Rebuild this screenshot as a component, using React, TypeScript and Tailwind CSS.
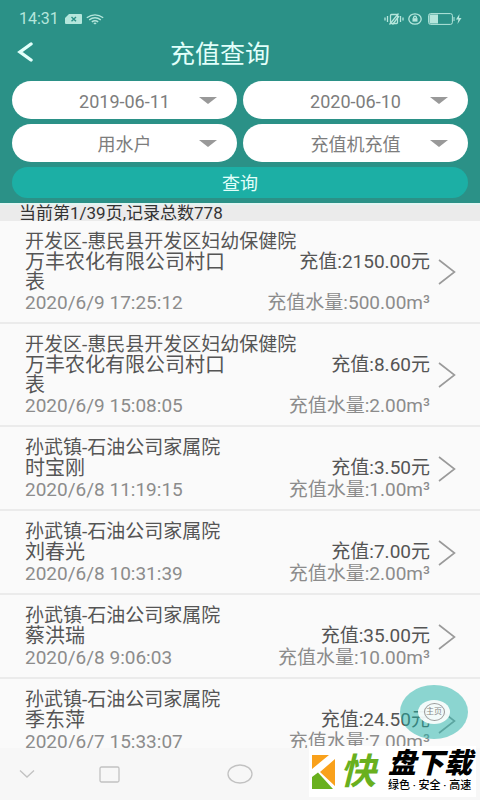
type Recharge = {
  site: string;
  name: string;
  time: string;
  amount: string;
  water: string;
};

const records: Recharge[] = [
  { site: '开发区-惠民县开发区妇幼保健院', name: '万丰农化有限公司村口表', time: '2020/6/9 17:25:12', amount: '2150.00', water: '500.00' },
  { site: '开发区-惠民县开发区妇幼保健院', name: '万丰农化有限公司村口表', time: '2020/6/9 15:08:05', amount: '8.60', water: '2.00' },
  { site: '孙武镇-石油公司家属院', name: '时宝刚', time: '2020/6/8 11:19:15', amount: '3.50', water: '1.00' },
  { site: '孙武镇-石油公司家属院', name: '刘春光', time: '2020/6/8 10:31:39', amount: '7.00', water: '2.00' },
  { site: '孙武镇-石油公司家属院', name: '蔡洪瑞', time: '2020/6/8 9:06:03', amount: '35.00', water: '10.00' },
  { site: '孙武镇-石油公司家属院', name: '季东萍', time: '2020/6/7 15:33:07', amount: '24.50', water: '7.00' },
];

const filters = [
  { label: '开始日期', value: '2019-06-11' },
  { label: '结束日期', value: '2020-06-10' },
  { label: '用户类型', value: '用水户' },
  { label: '充值方式', value: '充值机充值' },
];

function StatusBar() {
  return (
    <div className="flex h-[38px] items-center justify-between pl-[19px] pr-[18px] text-[#b5e6dc]">
      <div className="flex items-center gap-1">
        <span className="mr-[2px] text-[16px] leading-5">14:31</span>
        <svg width="17" height="10" viewBox="0 0 17 10">
          <path d="M4 0H16Q17 0 17 1V9Q17 10 16 10H1Q0 10 0 9V4Z" fill="currentColor" />
          <path d="M6.5 3l4.5 4.2M11 3L6.5 7.2" stroke="#2b9187" strokeWidth="1.4" />
        </svg>
        <svg width="18" height="11" viewBox="0 0 18 11" fill="none" stroke="currentColor" strokeWidth="1.4">
          <path d="M.8 3.7Q9-2 17.2 3.7M3.2 5.8Q9 1.8 14.8 5.8M5.8 7.9Q9 5.6 12.2 7.9" />
          <path d="M7.2 9L9 10.6 10.8 9Q9 8 7.2 9Z" fill="currentColor" stroke="none" />
        </svg>
      </div>
      <div className="flex items-center gap-1">
        <svg width="20" height="12" viewBox="0 0 20 12" fill="none" stroke="currentColor" strokeWidth="1.3">
          <path d="M1 4.5v3M3.5 3v6M16.5 3v6M19 4.5v3" />
          <rect x="6.5" y="1.5" width="7" height="9" rx="1" />
          <path d="M5.5 11.5L14.5.5M8.5 11.5L15 3" />
        </svg>
        <svg width="14" height="12" viewBox="0 0 14 12" fill="none" stroke="currentColor" strokeWidth="1.3">
          <ellipse cx="7" cy="6" rx="6.2" ry="5.2" />
          <rect x="4.5" y="5.2" width="5" height="3.4" fill="currentColor" stroke="none" />
          <path d="M5.5 5.5Q5.5 3.2 7 3.2T8.5 5.5" />
        </svg>
        <svg className="ml-[2px]" width="34" height="12" viewBox="0 0 34 12">
          <rect x=".6" y=".6" width="23.8" height="10.8" rx="2" fill="none" stroke="currentColor" />
          <rect x="1.5" y="1.5" width="8.5" height="9" fill="currentColor" />
          <path d="M26 4v4" stroke="currentColor" />
          <path d="M31.5 1L28 6.6h2.4L29.5 11 33.5 5H31Z" fill="currentColor" />
        </svg>
      </div>
    </div>
  );
}

function FilterSelect({ label, value }: { label: string; value: string }) {
  return (
    <div className="relative">
      <select
        aria-label={label}
        className="block h-[38px] w-full appearance-none rounded-[19px] bg-white pt-[2px] text-center text-[18px] text-[#7d7d7d]"
        defaultValue={value}
      >
        <option>{value}</option>
      </select>
      <svg className="pointer-events-none absolute right-5 top-4" width="18" height="7" viewBox="0 0 18 7">
        <path d="M0 0H18L9 7Z" fill="#999" />
      </svg>
    </div>
  );
}

function RecordRow({ record }: { record: Recharge }) {
  return (
    <li>
      <a href="#detail" className="flex items-center border-b-2 border-[#ebebeb] pb-[9px] pl-[25px] pr-6 pt-[10px]">
        <div className="min-w-0 flex-1 text-[19px]">
          <p className="whitespace-nowrap leading-[21px] text-[#555]">{record.site}</p>
          <div className="flex min-h-[21px] items-start justify-between leading-5 text-[#555]">
            <span className="w-1/2 break-all text-[20px]">{record.name}</span>
            <span className="whitespace-nowrap">充值:{record.amount}元</span>
          </div>
          <div className="flex items-center justify-between whitespace-nowrap leading-[21px] text-[#8c8c8c]">
            <span>{record.time}</span>
            <span>充值水量:{record.water}m³</span>
          </div>
        </div>
        <svg className="ml-2 shrink-0" width="18" height="26" viewBox="0 0 18 26">
          <path d="M1 1L16.5 13 1 25" fill="none" stroke="#9a9a9a" strokeWidth="1.6" />
        </svg>
      </a>
    </li>
  );
}

function SystemNav() {
  return (
    <nav className="flex h-[52px] shrink-0 items-center bg-[#f7f7f7] pl-[19px]">
      <button aria-label="收起">
        <svg width="16" height="10" viewBox="0 0 16 10">
          <path d="M1 1.5L8 8 15 1.5" fill="none" stroke="#c2c2c2" strokeWidth="1.3" />
        </svg>
      </button>
      <button aria-label="最近任务" className="ml-16">
        <svg width="21" height="17" viewBox="0 0 21 17">
          <rect x="1" y="1" width="19" height="15" rx="1.5" fill="none" stroke="#c2c2c2" strokeWidth="1.3" />
        </svg>
      </button>
      <button aria-label="主屏幕" className="ml-[107px]">
        <svg width="26" height="20" viewBox="0 0 26 20">
          <ellipse cx="13" cy="10" rx="12" ry="9" fill="none" stroke="#c2c2c2" strokeWidth="1.3" />
        </svg>
      </button>
    </nav>
  );
}

function Watermark() {
  return (
    <div className="absolute bottom-[3px] right-1 flex h-[51px] items-center bg-white pl-[3px] pr-1">
      <svg width="24" height="34" viewBox="0 0 24 34">
        <path d="M0 0H17L0 14Z M23 4V31L8 17Z" fill="#f9a11b" />
        <path d="M0 22L6 17.5 21 34H0Z" fill="#69b01e" />
      </svg>
      <span className="ml-1 text-[36px] font-bold italic leading-9 text-[#69b01e]">快</span>
      <div className="ml-3 whitespace-nowrap text-black">
        <p className="text-[28px] font-black italic leading-7">盘下载</p>
        <p className="text-[11px] font-medium leading-4">绿色 · 安全 · 高速</p>
      </div>
    </div>
  );
}

export default function App() {
  return (
    <div className="relative flex h-screen flex-col overflow-hidden bg-[#fafafa] font-['Roboto','Noto_Sans_CJK_SC',sans-serif]">

      {/* Header with filters */}
      <header className="shrink-0 bg-[#2b9187] pb-[5px]">
        <StatusBar />
        <div className="flex h-[43px] items-start pl-[17px] pr-[73px]">
          <button aria-label="返回" className="mt-1">
            <svg width="16" height="20" viewBox="0 0 16 20">
              <path d="M14 2L3 10 14 18" fill="none" stroke="#e2fffa" strokeWidth="3.4" strokeLinecap="round" />
            </svg>
          </button>
          <h1 className="flex-1 pt-[2px] text-center text-[25px] leading-[30px] text-[#e2fffa]">充值查询</h1>
        </div>
        <form className="px-3" onSubmit={(e) => e.preventDefault()}>
          <div className="grid grid-cols-2 gap-x-[6px] gap-y-[5px]">
            {filters.map((f) => (
              <FilterSelect key={f.label} label={f.label} value={f.value} />
            ))}
          </div>
          <button className="mt-[5px] block w-full rounded-full bg-[#1cafa5] pt-[2px] text-[18px] leading-[29px] text-[#e2fffa]">
            查询
          </button>
        </form>
      </header>

      {/* Paging summary */}
      <p className="shrink-0 border-t-2 border-[#e2f5f2] bg-[#ebebeb] pl-[19px] text-[17px] leading-4 text-[#333]">
        当前第1/39页,记录总数778
      </p>

      <ul className="min-h-0 flex-1 overflow-hidden">
        {records.map((r) => (
          <RecordRow key={r.time} record={r} />
        ))}
      </ul>

      <SystemNav />

      {/* Floating home button */}
      <button
        aria-label="主页"
        className="absolute bottom-[61px] right-3 flex h-[54px] w-[68px] items-center justify-center rounded-[50%] bg-[#1cafa5]/50"
      >
        <span className="flex h-6 w-8 items-center justify-center rounded-[50%] bg-white/90">
          <span className="flex h-[18px] w-[21px] items-center justify-center rounded-[50%] border border-[#999] text-[8px] leading-none text-[#888]">
            主页
          </span>
        </span>
      </button>

      <Watermark />
    </div>
  );
}
